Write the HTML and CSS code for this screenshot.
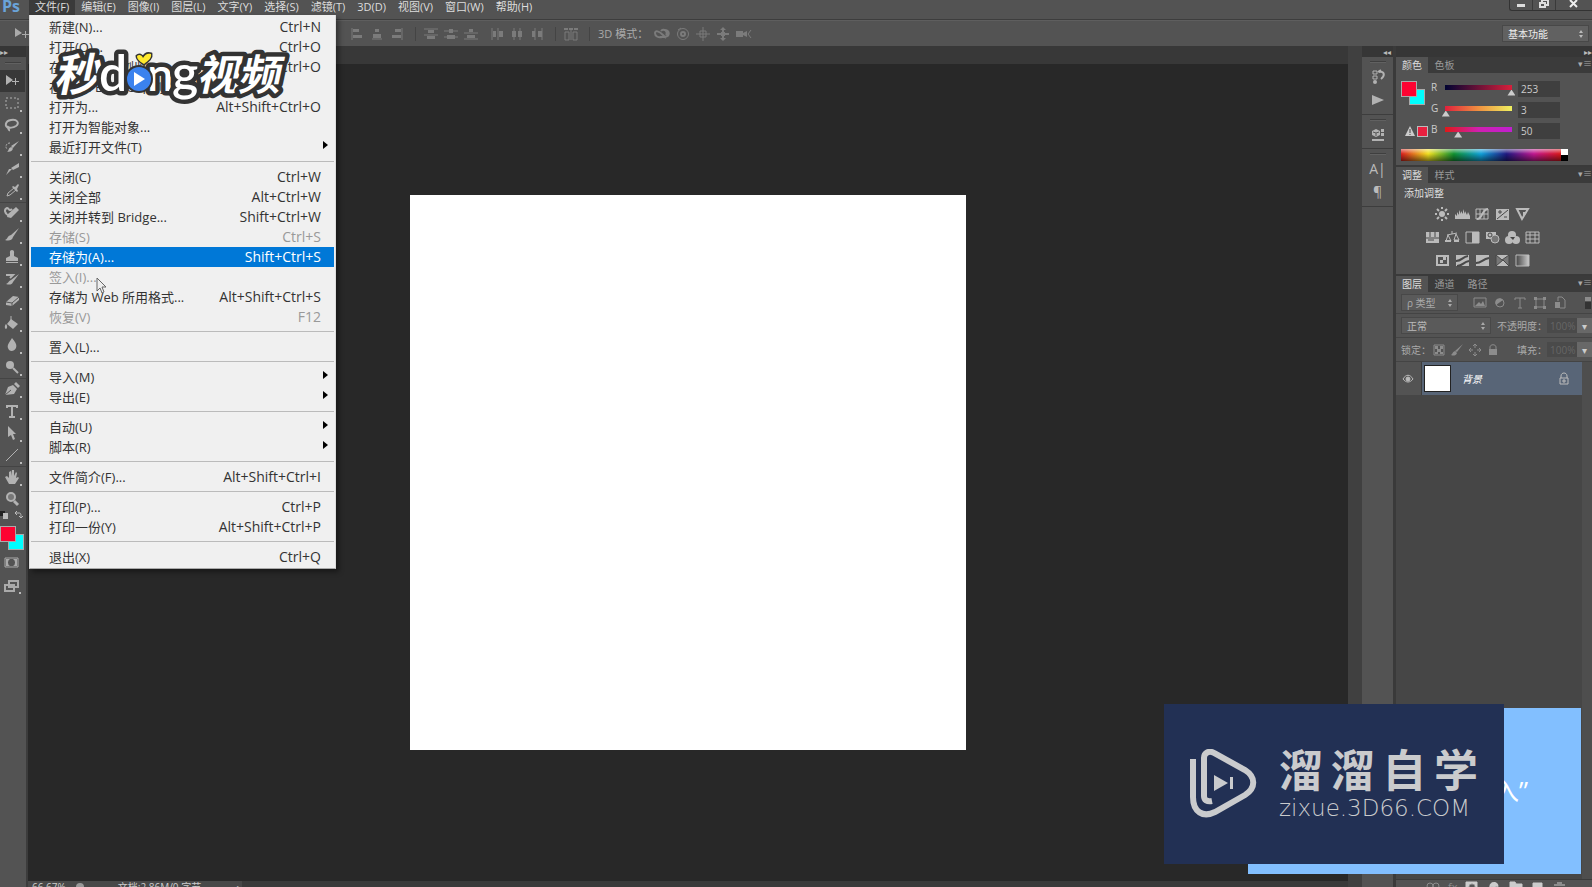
FILE: index.html
```html
<!DOCTYPE html>
<html lang="zh-CN">
<head>
<meta charset="utf-8">
<title>Photoshop</title>
<link rel="stylesheet" href="styles.css">
</head>
<body>
<div class="app">
  <header class="menubar">
    <span class="ps">Ps</span>
    <nav class="menus">
      <button class="open">文件(F)</button><button>编辑(E)</button><button>图像(I)</button><button>图层(L)</button><button>文字(Y)</button><button>选择(S)</button><button>滤镜(T)</button><button>3D(D)</button><button>视图(V)</button><button>窗口(W)</button><button>帮助(H)</button>
    </nav>
    <div class="winbtns">
      <button aria-label="最小化"><svg width="10" height="10"><path d="M1 4h8v3H1z" fill="#ddd"/></svg></button>
      <button aria-label="还原"><svg width="12" height="10" fill="none" stroke="#ddd" stroke-width="2"><path d="M4 2V0h6v5H8M2 3h5v4H2z"/></svg></button>
      <button class="close" aria-label="关闭"><svg width="10" height="10" stroke="#eee" stroke-width="2"><path d="M1 0l7 7M8 0L1 7"/></svg></button>
    </div>
  </header>

  <div class="options">
    <svg class="movetool" width="16" height="14" fill="#aaa"><path d="M1 1v9l7-4zM11 4h1v3h3v1h-3v3h-1V8H8V7h3z"/></svg>
    <div class="aligns">
      <div class="grp">
        <svg width="14" height="14"><path d="M2 1v12"/><path class="f" d="M3 2h6v3H3zM3 8h9v3H3z"/></svg>
        <svg width="14" height="14"><path d="M2 12h10"/><path class="f" d="M5 2h4v3H5zM3 7h8v4H3z"/></svg>
        <svg width="14" height="14"><path d="M12 1v12"/><path class="f" d="M5 2h6v3H5zM2 8h9v3H2z"/></svg>
      </div>
      <div class="grp">
        <svg width="14" height="14"><path d="M0 2h14M0 8h14"/><path class="f" d="M4 3h6v3H4zM3 9h8v3H3z"/></svg>
        <svg width="14" height="14"><path d="M0 4h14M0 10h14"/><path class="f" d="M5 2h4v4H5zM3 8h8v4H3z"/></svg>
        <svg width="14" height="14"><path d="M0 6h14M0 12h14"/><path class="f" d="M5 2h4v3H5zM3 8h8v3H3z"/></svg>
        <i class="gap"></i>
        <svg width="14" height="14"><path d="M2 1v12M8 1v12"/><path class="f" d="M3 4h3v6H3zM9 4h4v6H9z"/></svg>
        <svg width="14" height="14"><path d="M4 1v12M10 1v12"/><path class="f" d="M2 4h4v6H2zM8 4h4v6H8z"/></svg>
        <svg width="14" height="14"><path d="M5 1v12M12 1v12"/><path class="f" d="M2 4h3v6H2zM8 4h4v6H8z"/></svg>
      </div>
      <div class="grp"><svg width="14" height="14"><path d="M1 5h4v8H1zM9 5h4v8H9zM7 2v11"/><path class="f" d="M0 1h4v2H0zM5 1h4v2H5zM10 1h4v2h-4z"/></svg></div>
      <div class="grp mode">
        <span>3D 模式：</span>
        <svg width="16" height="14"><path stroke-width="2" d="M12 8a3 3 0 1 0-5-4M11 3c5 1 5 6 0 7H6M1 6c0-3 4-2 8 2l3 3M1 6c0 3 3 5 7 4"/></svg>
        <svg width="14" height="14"><circle cx="7" cy="7" r="5.500"/><circle cx="7" cy="7" r="2" stroke-width="2"/><path d="M2 3l3-2"/></svg>
        <svg width="14" height="14"><path d="M7 0v14M0 7h14M4 4h6v6H4z"/></svg>
        <svg width="14" height="14"><path stroke-width="2" d="M7 2v10M1 7h12"/><path class="f" d="M7 0l3 3H4zM7 14l3-3H4zM5 5h4v4H5z"/></svg>
        <svg width="16" height="14"><path class="f" d="M0 4h7v6H0zM7 6l4-2v6L7 8z"/><path d="M15 3l-3 4 3 4"/></svg>
      </div>
    </div>
    <label class="sel workspace"><select aria-label="工作区"><option>基本功能</option></select><svg width="6" height="10"><path d="M3 1l2 3H1zM3 9l2-3H1z"/></svg></label>
  </div>

  <div class="body">
    <aside class="tools">
      <div class="strip">▸▸</div>
      <div class="grip"></div>
      <div class="toolset">
        <button class="on" aria-label="移动"><svg width="16" height="16"><path class="f" d="M2 2v10l7-5zM11 5h1v3h3v1h-3v3h-1V9H8V8h3z"/></svg></button>
        <button aria-label="选框"><svg width="16" height="16"><path stroke-dasharray="2 2" d="M2 3h12v10H2z"/></svg></button>
        <button aria-label="套索"><svg width="16" height="16"><path stroke-width="2" d="M5 11C0 10 1 4 7 3c6-1 9 3 5 6-3 2-7 2-8 1-1 2 2 2 1 4"/></svg></button>
        <button aria-label="快速选择"><svg width="16" height="16"><path class="f" d="M15 2L9 9 7 7zM8 8c2 2 0 5-5 5 2-1 1-5 5-5z"/><path d="M6 4C2 4 1 8 3 10" stroke-dasharray="2 1"/></svg></button>
        <button aria-label="裁剪"><svg width="16" height="16"><path class="f" d="M15 2v4L9 9 7 7zM8 8L2 14l3-6z"/></svg></button>
        <button aria-label="吸管"><svg width="16" height="16"><path d="M3 13l1-3 6-5 2 2-6 5z"/><path class="f" d="M9 3l2 1 3-3 1 1-2 4 1 2-1 1-5-5z"/></svg></button>
        <i></i>
        <button aria-label="修复"><svg width="16" height="16"><path class="f" d="M12 2l3 3-8 8-4-1 1-3z"/><path stroke-width="2" d="M6 11C0 9 0 4 3 3c2 0 2 4 5 1"/></svg></button>
        <button aria-label="画笔"><svg width="16" height="16"><path class="f" d="M15 1L9 10 7 8zM7 8l2 2c-1 4-5 4-8 3 3-1 2-4 6-5z"/></svg></button>
        <button aria-label="图章"><svg width="16" height="16"><path class="f" d="M6 7V4c-1-4 5-4 4 0v3l4 2v3H2V9zM2 13h12v1H2z"/></svg></button>
        <button aria-label="历史画笔"><svg width="16" height="16"><path class="f" d="M15 3L9 11 7 9zM7 9l2 2c-1 3-4 3-7 2 3-1 2-3 5-4z"/><path stroke-width="2" d="M2 4h7L6 7"/></svg></button>
        <button aria-label="橡皮擦"><svg width="16" height="16"><path class="f" d="M2 9l7-6 6 1v3l-7 6-6-1z"/><path style="stroke:#555" d="M2 9l6 1 7-6M8 10v3"/></svg></button>
        <button aria-label="油漆桶"><svg width="16" height="16"><path class="f" d="M7 4l7 5-5 5-6-5zM2 9c2 2 1 5 0 5s-2-3 0-5z"/><path d="M7 8V1"/></svg></button>
        <button aria-label="模糊"><svg width="16" height="16"><path class="f" d="M8 1c4 5 5 7 4 10-2 4-7 4-8 0-1-3 1-5 4-10z"/></svg></button>
        <button aria-label="减淡"><svg width="16" height="16"><circle class="f" cx="6" cy="6" r="4"/><path stroke-width="2" d="M9 9l5 5"/></svg></button>
        <i></i>
        <button aria-label="钢笔"><svg width="16" height="16"><path class="f" d="M1 14L4 6l5-2 4 4-3 5zM10 3l2-2 4 4-2 2z"/><path stroke="#555" d="M1 14l6-5"/></svg></button>
        <button aria-label="文字"><svg width="16" height="16"><path stroke-width="2" d="M3 5V3h10v2M8 3v10M5 14h6"/></svg></button>
        <button aria-label="路径选择"><svg width="16" height="16"><path class="f" d="M4 1l8 8H9l2 5-2 1-2-5-3 2z"/></svg></button>
        <button aria-label="直线"><svg width="16" height="16"><path d="M2 14L14 2"/></svg></button>
        <i></i>
        <button aria-label="抓手"><svg width="16" height="16"><path class="f" d="M5 15L1 8l2-1 2 2V3l2-1v5l1-6h2v6l2-4 1 1-1 5 2-1 1 1-4 6z"/></svg></button>
        <button class="plain" aria-label="缩放"><svg width="16" height="16"><circle cx="7" cy="6" r="4" fill="#777" stroke-width="2"/><path stroke-width="3" d="M10 10l4 4"/></svg></button>
      </div>
      <svg class="swap" width="24" height="10"><path fill="#222" d="M0 1h5v5H0z"/><path fill="#bbb" d="M3 3h5v6H3z"/><path fill="none" stroke="#bbb" d="M15 3h4c2 0 2 1 2 5M17 1l-2 2 2 2M19 6l2 2 2-2"/></svg>
      <div class="swatches"><b></b><em></em></div>
      <svg class="mask" width="24" height="16"><path fill="none" stroke="#aaa" d="M5 3h13v9H5z"/><path fill="#aaa" d="M6 4h4a4 4 0 0 0 0 7H6zM17 4h-4a4 4 0 0 1 0 7h4z"/></svg>
      <svg class="screen" width="24" height="16"><path fill="#535353" stroke="#aaa" stroke-width="2" d="M9 2h9v6H9zM5 6h9v6H5z"/><path fill="#bbb" d="M19 13h2v2h-2z"/></svg>
    </aside>

    <main class="doc">
      <div class="tabs"></div>
      <div class="stage"><div class="canvas"></div></div>
      <footer class="status"><div><span>66.67%</span><svg width="12" height="12"><circle cx="6" cy="6" r="4" fill="#999"/></svg><span class="size">文档:2.86M/0 字节</span><span>▸</span></div></footer>
    </main>

    <aside class="dock">
      <div class="strip">◂◂</div>
      <section><div class="grip"></div>
        <button aria-label="历史记录"><svg width="16" height="16"><path d="M3 2h4v3H3zM3 7h4v3H3z"/><path stroke-width="2" d="M9 3c6-1 6 4 2 7M8 3l3-2"/><circle class="f" cx="5" cy="13" r="2"/></svg></button>
        <button aria-label="动作"><svg width="16" height="16"><path class="f" d="M2 3l12 5-12 5z"/></svg></button></section>
      <section class="one"><div class="grip"></div>
        <button aria-label="属性"><svg width="16" height="16"><path class="f" d="M2 4l4-2 4 2v4l-4 2-4-2zM11 2h3v3h-3zM11 6h3v3h-3zM2 12h12v2H2z"/><path stroke="#555" d="M3 5l3 1 3-1M6 6v3"/></svg></button></section>
      <section><div class="grip"></div><button>A|</button><button>¶</button></section>
    </aside>

    <aside class="panels">
      <div class="strip right">▸▸</div>
      <section class="color">
        <div class="ptabs"><button class="on">颜色</button><button>色板</button><i class="pm">▾≡</i></div>
        <div class="cbody">
          <div class="csw"><div class="swatches"><b></b><em></em></div>
            <div class="warn"><svg width="12" height="12"><path d="M6 1l5 10H1z" fill="#ccc"/><path stroke="#444" d="M6 4v4M6 9v1"/></svg><b></b></div></div>
          <div class="sliders">
            <label for="r">R</label><input class="r" type="range" min="0" max="255" value="253" aria-label="红"><input id="r" type="text" value="253">
            <label for="g">G</label><input class="g" type="range" min="0" max="255" value="3" aria-label="绿"><input id="g" type="text" value="3">
            <label for="b">B</label><input class="b" type="range" min="0" max="255" value="50" aria-label="蓝"><input id="b" type="text" value="50">
          </div>
        </div>
        <div class="spectrum"><div></div><i></i></div>
      </section>

      <section class="adjust">
        <div class="ptabs"><button class="on">调整</button><button>样式</button><i class="pm">▾≡</i></div>
        <h2>添加调整</h2>
        <div class="arow">
          <svg width="15" height="15"><circle class="f" cx="7" cy="7" r="3"/><path stroke-width="2" d="M7 0v2M7 12v2M0 7h2M12 7h2M2 2l2 2M10 10l2 2M12 2l-2 2M2 12l2-2"/></svg>
          <svg width="15" height="15"><path class="f" d="M0 12V7l2 2V5l2 3V3l2 4V4l2 3V2l2 5V4l2 4 1-3 2 4v3z"/></svg>
          <svg width="15" height="15"><path d="M1 2h12v10H1zM1 7h12M5 2v10M9 2v10"/><path stroke-width="2" d="M2 12c6 0 4-9 11-10"/></svg>
          <svg width="15" height="15"><path class="f" d="M1 2h13v11H1z"/><path class="k" d="M2 12L13 3M3 5h4M5 3v4M9 10h3"/></svg>
          <svg width="15" height="15"><path stroke-width="2" d="M2 2h11L7 12z"/><path class="f" d="M8 5h4l-4 6z"/></svg>
        </div>
        <div class="arow">
          <svg width="15" height="15"><path class="f" d="M1 2h13v11H1z"/><path class="k" d="M5 2v5M10 2v5M1 8h13M3 10h6"/></svg>
          <svg width="15" height="15"><path d="M7 1v3M2 5l10-2M3 5l-2 6h5L3 5M11 4L9 10h5z"/><path class="f" d="M0 10h6v2H0zM9 10h5v2H9z"/></svg>
          <svg width="15" height="15"><path d="M1 2h13v11H1z"/><path class="f" d="M7 2h7v11H7z"/></svg>
          <svg width="15" height="15"><path class="f" d="M1 2h10v7H1z"/><circle cx="10" cy="9" r="4" fill="#777"/><circle class="k" cx="5" cy="5" r="2"/></svg>
          <svg width="15" height="15"><circle class="f" cx="7" cy="5" r="4"/><circle class="f" cx="4" cy="10" r="4"/><circle class="f" cx="11" cy="10" r="4"/><path fill="#444" stroke="none" d="M5 7h5l-2 3z"/></svg>
          <svg width="15" height="15"><path d="M1 2h13v11H1zM1 5h13M1 9h13M5 2v11M10 2v11"/></svg>
        </div>
        <div class="arow">
          <svg width="15" height="15"><path stroke-width="2" d="M2 3h11v9H2z"/><path class="f" d="M5 10V7h3V4h3v3H8v3z"/></svg>
          <svg width="15" height="15"><path class="f" d="M1 2h13v11H1z"/><path class="k" stroke-width="2" d="M1 8c6 0 6-4 12-5M2 13c6 0 6-4 12-5"/></svg>
          <svg width="15" height="15"><path class="f" d="M1 2h13v11H1z"/><path class="k" stroke-width="2" d="M1 10c6 0 6-4 13-5"/></svg>
          <svg width="15" height="15"><path class="f" d="M1 2h13v11H1z"/><path class="k" fill="#777" d="M1 2l6 5 7-5v11L8 7l-7 6z"/></svg>
          <svg width="15" height="15"><defs><linearGradient id="gm"><stop stop-color="#444"/><stop offset="1" stop-color="#ccc"/></linearGradient></defs><path fill="url(#gm)" d="M1 2h13v11H1z"/></svg>
        </div>
      </section>

      <section class="layers">
        <div class="ptabs"><button class="on">图层</button><button>通道</button><button>路径</button><i class="pm">▾≡</i></div>
        <div class="lrow filter">
          <label class="sel kind"><select aria-label="滤镜类型"><option>ρ 类型</option></select><svg width="6" height="10"><path d="M3 1l2 3H1zM3 9l2-3H1z"/></svg></label>
          <svg width="14" height="14"><path d="M1 2h12v9H1z"/><path class="f" d="M2 10l4-4 2 2 2-3 2 5z"/></svg>
          <svg width="14" height="14"><circle cx="7" cy="7" r="4"/><path class="f" d="M3 9a4 4 0 0 1 7-5z"/></svg>
          <svg width="14" height="14"><path d="M2 4V2h10v2M7 2v10M5 12h4"/></svg>
          <svg width="14" height="14"><path d="M3 3h8v8H3z"/><path class="f" d="M1 1h3v3H1zM10 1h3v3h-3zM1 10h3v3H1zM10 10h3v3h-3z"/></svg>
          <svg width="14" height="14"><path d="M5 5V1h4l3 3v8H7"/><path class="f" d="M2 6h5v6H2z"/></svg>
          <svg class="end" width="8" height="14"><path class="f" d="M1 1h6v4H1z"/><path fill="#333" stroke="none" d="M1 6h6v7H1z"/></svg>
        </div>
        <div class="lrow">
          <label class="sel blend"><select aria-label="混合模式"><option>正常</option></select><svg width="6" height="10"><path d="M3 1l2 3H1zM3 9l2-3H1z"/></svg></label>
          <label class="pct" for="op">不透明度：</label><input id="op" type="text" value="100%" disabled><button class="dd" aria-label="不透明度选项">▾</button>
        </div>
        <div class="lrow lock">
          <span>锁定：</span>
          <svg width="14" height="14"><path d="M2 2h10v10H2z"/><path class="f" d="M3 3h3v3H3zM8 3h3v3H8zM5 6h4v3H5zM3 9h3v2H3zM8 9h3v2H8z"/></svg>
          <svg width="14" height="14"><path class="f" d="M13 1L7 9 5 8zM5 8l2 2c-1 3-4 3-6 2 2-1 1-3 4-4z"/></svg>
          <svg width="14" height="14"><path d="M7 1v4M7 9v4M1 7h4M9 7h4M5 3l2-2 2 2M5 11l2 2 2-2M3 5L1 7l2 2M11 5l2 2-2 2"/></svg>
          <svg width="14" height="14"><path d="M4 7V4c0-3 6-3 6 0v3"/><path class="f" d="M3 6h8v6H3z"/></svg>
          <label class="pct" for="fill">填充：</label><input id="fill" type="text" value="100%" disabled><button class="dd" aria-label="填充选项">▾</button>
        </div>
        <div class="list">
          <div class="layer">
            <svg class="eye" width="14" height="12"><path d="M2 6c3-5 7-5 10 0-3 4-7 4-10 0z"/><circle cx="7" cy="6" r="2" fill="#bbb"/></svg>
            <div class="lsel"><div class="thumb"></div><em>背景</em><svg width="12" height="14"><path d="M3 6V4c0-4 6-4 6 0v2M2 6h8v6H2zM5 8h2v2H5z"/></svg></div>
          </div>
        </div>
        <div class="lfoot">
          <svg width="14" height="14"><circle cx="4" cy="6" r="3"/><circle cx="10" cy="6" r="3"/></svg>
          <span>fx</span>
          <svg width="14" height="14"><path class="f l" d="M1 2h11v10H1z"/><circle cx="7" cy="7" r="3" fill="#555"/></svg>
          <svg width="14" height="14"><circle class="l" cx="7" cy="7" r="4"/><path class="f l" d="M3 7a4 4 0 0 1 8-1z"/></svg>
          <svg width="14" height="14"><path class="f l" d="M1 2h5l1 2h6v8H1z"/></svg>
          <svg width="14" height="14"><path class="f l" d="M2 3h9v9H2z"/></svg>
          <svg width="14" height="14"><path class="f" d="M1 4h11v2H1zM4 2h5v2H4z"/></svg>
        </div>
      </section>
    </aside>
  </div>

  <div class="dropdown">
    <button>新建(N)...<kbd>Ctrl+N</kbd></button>
    <button>打开(O)...<kbd>Ctrl+O</kbd></button>
    <button>在 Bridge 中浏览(B)...<kbd>Alt+Ctrl+O</kbd></button>
    <button>在 Mini Bridge 中浏览(G)...</button>
    <button>打开为...<kbd>Alt+Shift+Ctrl+O</kbd></button>
    <button>打开为智能对象...</button>
    <button class="sub">最近打开文件(T)</button>
    <hr>
    <button>关闭(C)<kbd>Ctrl+W</kbd></button>
    <button>关闭全部<kbd>Alt+Ctrl+W</kbd></button>
    <button>关闭并转到 Bridge...<kbd>Shift+Ctrl+W</kbd></button>
    <button disabled>存储(S)<kbd>Ctrl+S</kbd></button>
    <button class="hot">存储为(A)...<kbd>Shift+Ctrl+S</kbd></button>
    <button disabled>签入(I)...</button>
    <button>存储为 Web 所用格式...<kbd>Alt+Shift+Ctrl+S</kbd></button>
    <button disabled>恢复(V)<kbd>F12</kbd></button>
    <hr>
    <button>置入(L)...</button>
    <hr>
    <button class="sub">导入(M)</button>
    <button class="sub">导出(E)</button>
    <hr>
    <button class="sub">自动(U)</button>
    <button class="sub">脚本(R)</button>
    <hr>
    <button>文件简介(F)...<kbd>Alt+Shift+Ctrl+I</kbd></button>
    <hr>
    <button>打印(P)...<kbd>Ctrl+P</kbd></button>
    <button>打印一份(Y)<kbd>Alt+Shift+Ctrl+P</kbd></button>
    <hr>
    <button>退出(X)<kbd>Ctrl+Q</kbd></button>
  </div>

  <svg class="cursor" width="12" height="18"><path d="M1 1v13l3-3 2 5 2-1-2-5h4z" fill="#eee" stroke="#666"/></svg>

  <svg class="brand" width="250" height="70" viewBox="45 45 250 70">
    <g class="btext">
      <g transform="skewX(-12)"><text class="cjk" x="73" y="91" font-size="45">秒</text><text class="cjk" x="216" y="90" font-size="42">视</text><text class="cjk" x="257" y="90" font-size="42">频</text></g>
      <text class="lat" x="99" y="91" font-size="50">d</text><text class="lat" x="147" y="91" font-size="47">n</text><text class="lat" x="172" y="91" font-size="50">g</text>
    </g>
    <circle cx="139" cy="79" r="14" fill="#333"/>
    <circle cx="139" cy="79" r="12" fill="#3b82ee"/>
    <path d="M134 72l11 7-11 7z" fill="#fff"/>
    <path d="M137 56c2-2 5-1 6 2 2-4 5-5 8-4 1 4-3 7-7 10-3-2-7-4-7-8z" fill="#ffe92e" stroke="#333" stroke-width="3" paint-order="stroke"/>
  </svg>

  <div class="note">入”</div>
  <div class="watermark">
    <svg width="68" height="70" fill="none" stroke="#cacbcd" stroke-width="6"><path d="M4 10v38c0 15 10 21 22 15l30-17c11-7 11-18 0-25L25 4c-5-3-10 0-10 5v38c0 4 3 6 8 5"/><path fill="#cacbcd" stroke="none" d="M25 26l14 8-14 8zM41 28h3v12h-3z"/></svg>
    <div class="wtext"><div class="wname"><span>溜</span><span>溜</span><span>自</span><span>学</span></div><div class="wurl">zixue.3D66.COM</div></div>
  </div>
</div>
</body>
</html>
```
FILE: styles.css
```css
* { box-sizing: border-box; }
body { margin: 0; overflow: hidden; background: #282828; color: #ccc; font: 11px/14px "Open Sans", "Noto Sans CJK SC", sans-serif; }
button, input, select { font: inherit; color: inherit; border: 0; padding: 0; margin: 0; background: none; border-radius: 0; }
i, em { font-style: normal; }
svg { display: block; flex: none; }
.app { position: relative; height: 100vh; display: flex; flex-direction: column; overflow: hidden; }

/* Menu bar */
.menubar { flex: none; height: 20px; background: #535353; border-bottom: 1px solid #3d3d3d; display: flex; align-items: flex-start; }
.ps { width: 29px; padding-left: 2px; font-size: 16px; line-height: 13px; font-weight: 700; color: #6aa3d8; }
.menus { display: flex; gap: 0; }
.menus button { height: 15px; line-height: 13px; padding: 0 6px 2px; color: #ddd; white-space: nowrap; }
.menus .open { background: #3a3a3a; }
.winbtns { margin-left: auto; display: flex; height: 11px; border: 1px solid #333; border-top: 0; border-right: 0; border-radius: 0 0 0 3px; }
.winbtns button { width: 23px; display: flex; justify-content: center; border-right: 1px solid #3a3a3a; }
.winbtns .close { width: 36px; border: 0; }

/* Options bar */
.options { flex: none; height: 26px; background: #535353; border-top: 1px solid #5e5e5e; display: flex; align-items: center; padding: 0 3px 0 14px; }
.aligns { display: flex; margin-left: 320px; }
.grp { display: flex; align-items: center; gap: 6px; padding-right: 11px; border-right: 1px solid #444; margin-right: 8px; }
.grp .gap { width: 0; }
.mode { border: 0; gap: 6px; color: #aaa; }
.mode span { white-space: nowrap; }
.aligns svg { stroke: #7b7b7b; fill: none; }
.aligns .f { fill: #7b7b7b; stroke: none; }
.sel { display: flex; align-items: center; background: #616161; border: 1px solid #484848; height: 17px; padding-right: 4px; }
.sel select { appearance: none; flex: 1; min-width: 0; padding-left: 5px; outline: 0; line-height: 14px; }
.sel svg { fill: #bbb; }
.workspace { margin-left: auto; width: 87px; color: #eee; font-size: 10px; }

/* Work area */
.body { flex: 1; min-height: 0; display: flex; }
.strip { height: 11px; background: #363636; font-size: 8px; line-height: 11px; color: #bbb; flex: none; }
.tools { flex: none; width: 28px; background: #535353; border-right: 2px solid #3c3c3c; display: flex; flex-direction: column; }
.grip { height: 2px; width: 16px; margin: 4px auto 7px; background: #3f3f3f; border-bottom: 1px solid #616161; flex: none; }
.tools .grip { margin: 5px 5px 6px; }
.toolset { display: flex; flex-direction: column; }
.toolset button { height: 22px; width: 25px; padding: 3px 0 3px 4px; position: relative; }
.toolset button::after { content: ""; position: absolute; right: 3px; bottom: 2px; width: 2px; height: 2px; background: #bbb; }
.toolset .on { background: #383838; }
.toolset .on::after, .toolset .plain::after { display: none; }
.toolset i { height: 1px; margin-bottom: -1px; background: #444; }
.toolset svg, .dock svg { fill: none; stroke: #b2b2b2; }
.toolset .f, .dock .f { fill: #b2b2b2; stroke: none; }
.swap { margin-bottom: 6px; }
.swatches { position: relative; height: 24px; width: 24px; flex: none; }
.swatches b, .swatches em { position: absolute; width: 16px; height: 16px; border: 1px solid #aaa; }
.swatches b { left: 0; top: 0; background: #fd0332; z-index: 1; }
.swatches em { left: 8px; top: 8px; background: #0ff; }
.mask { margin-top: 5px; }
.screen { margin-top: 8px; }

.doc { flex: 1; min-width: 0; display: flex; flex-direction: column; }
.tabs { height: 18px; background: #383838; flex: none; }
.stage { flex: 1; min-height: 0; display: flex; align-items: center; justify-content: center; background: #282828; }
.canvas { height: 68%; aspect-ratio: 1; background: #fff; }
.status { height: 6px; overflow: hidden; background: #3a3a3a; flex: none; }
.status div { display: flex; width: 214px; background: #484848; line-height: 12px; font-size: 10px; gap: 8px; padding-left: 4px; }
.status .size { margin-left: 24px; margin-right: auto; }

.dock { flex: none; width: 48px; background: #535353; border-left: 14px solid #404040; border-right: 3px solid #3a3a3a; display: flex; flex-direction: column; }
.dock .strip { text-align: right; padding-right: 2px; }
.dock section { border-bottom: 1px solid #3d3d3d; height: 58px; display: flex; flex-direction: column; align-items: center; }
.dock .one { height: 34px; }
.dock .grip { margin: 4px auto 0; }
.dock button { height: 23px; min-height: 23px; margin-top: 2px; font-size: 14px; color: #bbb; display: flex; align-items: center; }
.dock button + button { margin-top: 0; }

/* Panels */
.panels { flex: none; width: 196px; background: #535353; display: flex; flex-direction: column; }
.right { text-align: right; }
.ptabs { display: flex; height: 16px; background: #3b3b3b; flex: none; }
.ptabs button { width: 33px; line-height: 14px; color: #999; font-size: 10px; }
.ptabs .on { background: #535353; color: #ddd; width: 32px; }
.pm { margin-left: auto; font-size: 9px; color: #aaa; }
.color { height: 110px; border-bottom: 2px solid #3a3a3a; flex: none; }
.cbody { display: flex; padding: 8px 0 0 5px; height: 76px; }
.csw { width: 30px; flex: none; }
.warn { display: flex; gap: 1px; margin: 20px 0 0 3px; align-items: center; }
.warn b { width: 11px; height: 11px; background: #e8203f; border: 1px solid #bbb; }
.sliders { display: grid; grid-template-columns: 8px 75px 42px; grid-auto-rows: 16px; row-gap: 5px; column-gap: 2px; align-items: start; }
.sliders label { font-size: 10px; line-height: 12px; }
.sliders input[type=text] { width: 42px; height: 16px; background: #3f3f3f; padding-left: 3px; outline: 0; font-size: 10px; }
.sliders input[type=range] { appearance: none; width: 75px; height: 12px; }
.sliders input[type=range]::-webkit-slider-runnable-track { height: 5px; background: var(--t) 4px 0 / calc(100% - 8px) 100% no-repeat; }
.sliders input[type=range]::-webkit-slider-thumb { appearance: none; width: 8px; height: 6px; margin-top: 5px; background: #ccc; clip-path: polygon(50% 0, 100% 100%, 0 100%); }
.r { --t: linear-gradient(90deg, #000332, #d8203c); }
.g { --t: linear-gradient(90deg, #e0203c, #ef9040, #eef060); }
.b { --t: linear-gradient(90deg, #e01818, #d020b0, #c020d0); }
.spectrum { display: flex; height: 12px; width: 167px; margin: 0 0 0 5px; }
.spectrum div { flex: 1; background: linear-gradient(180deg, #fff8, transparent 40%, #0008), linear-gradient(90deg, #d81e1e, #f0e020 17%, #109030 33%, #10a0d8 50%, #201880 66%, #c01890 83%, #d81818); }
.spectrum i { width: 7px; background: linear-gradient(#fff 50%, #000 50%); }
.adjust { height: 109px; border-bottom: 2px solid #3a3a3a; flex: none; }
.adjust h2 { margin: 3px 0 7px 8px; font-size: 10px; line-height: 14px; font-weight: 400; color: #ddd; }
.arow { display: flex; justify-content: center; gap: 5px; width: 172px; height: 23px; }
.arow svg { fill: none; stroke: #bbb; }
.arow .f { fill: #bbb; stroke: none; }
.arow .k { stroke: #484848; }
.layers { flex: 1; min-height: 0; display: flex; flex-direction: column; }
.lrow { height: 24px; flex: none; display: flex; align-items: center; padding-left: 5px; border-bottom: 1px solid #444; color: #aaa; font-size: 10px; }
.lrow svg, .lfoot svg { fill: none; stroke: #8c8c8c; }
.layer svg { fill: none; stroke: #bbb; }
.lrow .f, .lfoot .f { fill: #8c8c8c; stroke: none; }
.lrow .sel svg { fill: #aaa; stroke: none; }
.filter { height: 22px; gap: 6px; }
.kind { width: 57px; margin-right: 9px; background: #5a5a5a; }
.filter .end { margin-left: auto; }
.blend { width: 90px; color: #bbb; background: #5a5a5a; }
.pct { margin-left: auto; white-space: nowrap; }
.lrow input { width: 30px; height: 15px; background: #4a4a4a; color: #666; padding-left: 3px; }
.dd { width: 15px; height: 15px; background: #686868; color: #ccc; line-height: 14px; }
.lock { gap: 4px; }
.lock span { width: 27px; white-space: nowrap; }
.lock .pct { margin-right: -4px; }
.lock input { margin-right: -4px; }
.list { flex: 1; background: #464646; border-right: 10px solid #4e4e4e; }
.layer { display: flex; height: 33px; align-items: center; background: #535353; }
.eye { margin: 0 6px 0 5px; }
.lsel { flex: 1; height: 100%; background: #586577; border-left: 1px solid #3d3d3d; display: flex; align-items: center; padding: 0 12px 0 2px; color: #fff; font-size: 10px; }
.lsel em { font-style: italic; margin: 0 auto 0 11px; }
.thumb { width: 27px; height: 27px; background: #fff; border: 1px solid #222; }
.lfoot { height: 8px; overflow: hidden; display: flex; gap: 8px; padding-left: 30px; border-top: 1px solid #3b3b3b; color: #888; flex: none; }
.lfoot .l { stroke: #ccc; }
.lfoot .f.l { fill: #ccc; }

/* Open file menu */
.dropdown { position: absolute; left: 29px; top: 15px; width: 307px; padding: 2px 1px 1px; background: #f0f0f0; border: 1px solid #ddd; border-top: 0; border-bottom: 1px solid #aaa; box-shadow: 3px 3px 5px #0006; display: flex; flex-direction: column; font-size: 13px; color: #333; }
.dropdown button { display: flex; justify-content: space-between; align-items: center; height: 20px; padding: 0 13px 0 18px; white-space: nowrap; line-height: 20px; }
.dropdown kbd { font: inherit; font-size: 14px; }
.dropdown button:disabled { color: #999; }
.dropdown .hot { background: #0078d7; color: #fff; }
.dropdown hr { height: 1px; width: 100%; margin: 4px 0 5px; border: 0; background: #bbb; }
.dropdown .sub { padding-right: 6px; }
.sub::after { content: ""; margin-bottom: 5px; border-left: 5px solid #000; border-top: 4px solid transparent; border-bottom: 4px solid transparent; }
.cursor { position: absolute; left: 96px; top: 277px; }

/* Overlays */
.brand { position: absolute; left: 45px; top: 45px; }
.btext text { fill: #fff; stroke: #333; stroke-width: 9px; stroke-linejoin: round; paint-order: stroke; }
.cjk { font-family: "Noto Sans CJK SC", sans-serif; font-weight: 700; }
.lat { font-family: Lato, sans-serif; font-weight: 600; }
.note { position: absolute; right: 11px; bottom: 13px; width: 333px; height: 166px; padding: 66px 53px 0 0; text-align: right; background: #82bfff; color: #fff; font-size: 26px; line-height: 32px; }
.watermark { position: absolute; right: 88px; bottom: 23px; width: 340px; height: 160px; background: #223054; display: flex; align-items: center; padding: 0 26px 0 25px; gap: 22px; color: #cacbcd; }
.wtext { flex: 1; }
.wname { display: flex; justify-content: space-between; margin-bottom: 6px; font: 700 44px/42px "Noto Sans CJK SC", sans-serif; }
.wurl { font: 200 23px/26px "DejaVu Sans", sans-serif; white-space: nowrap; }
```
